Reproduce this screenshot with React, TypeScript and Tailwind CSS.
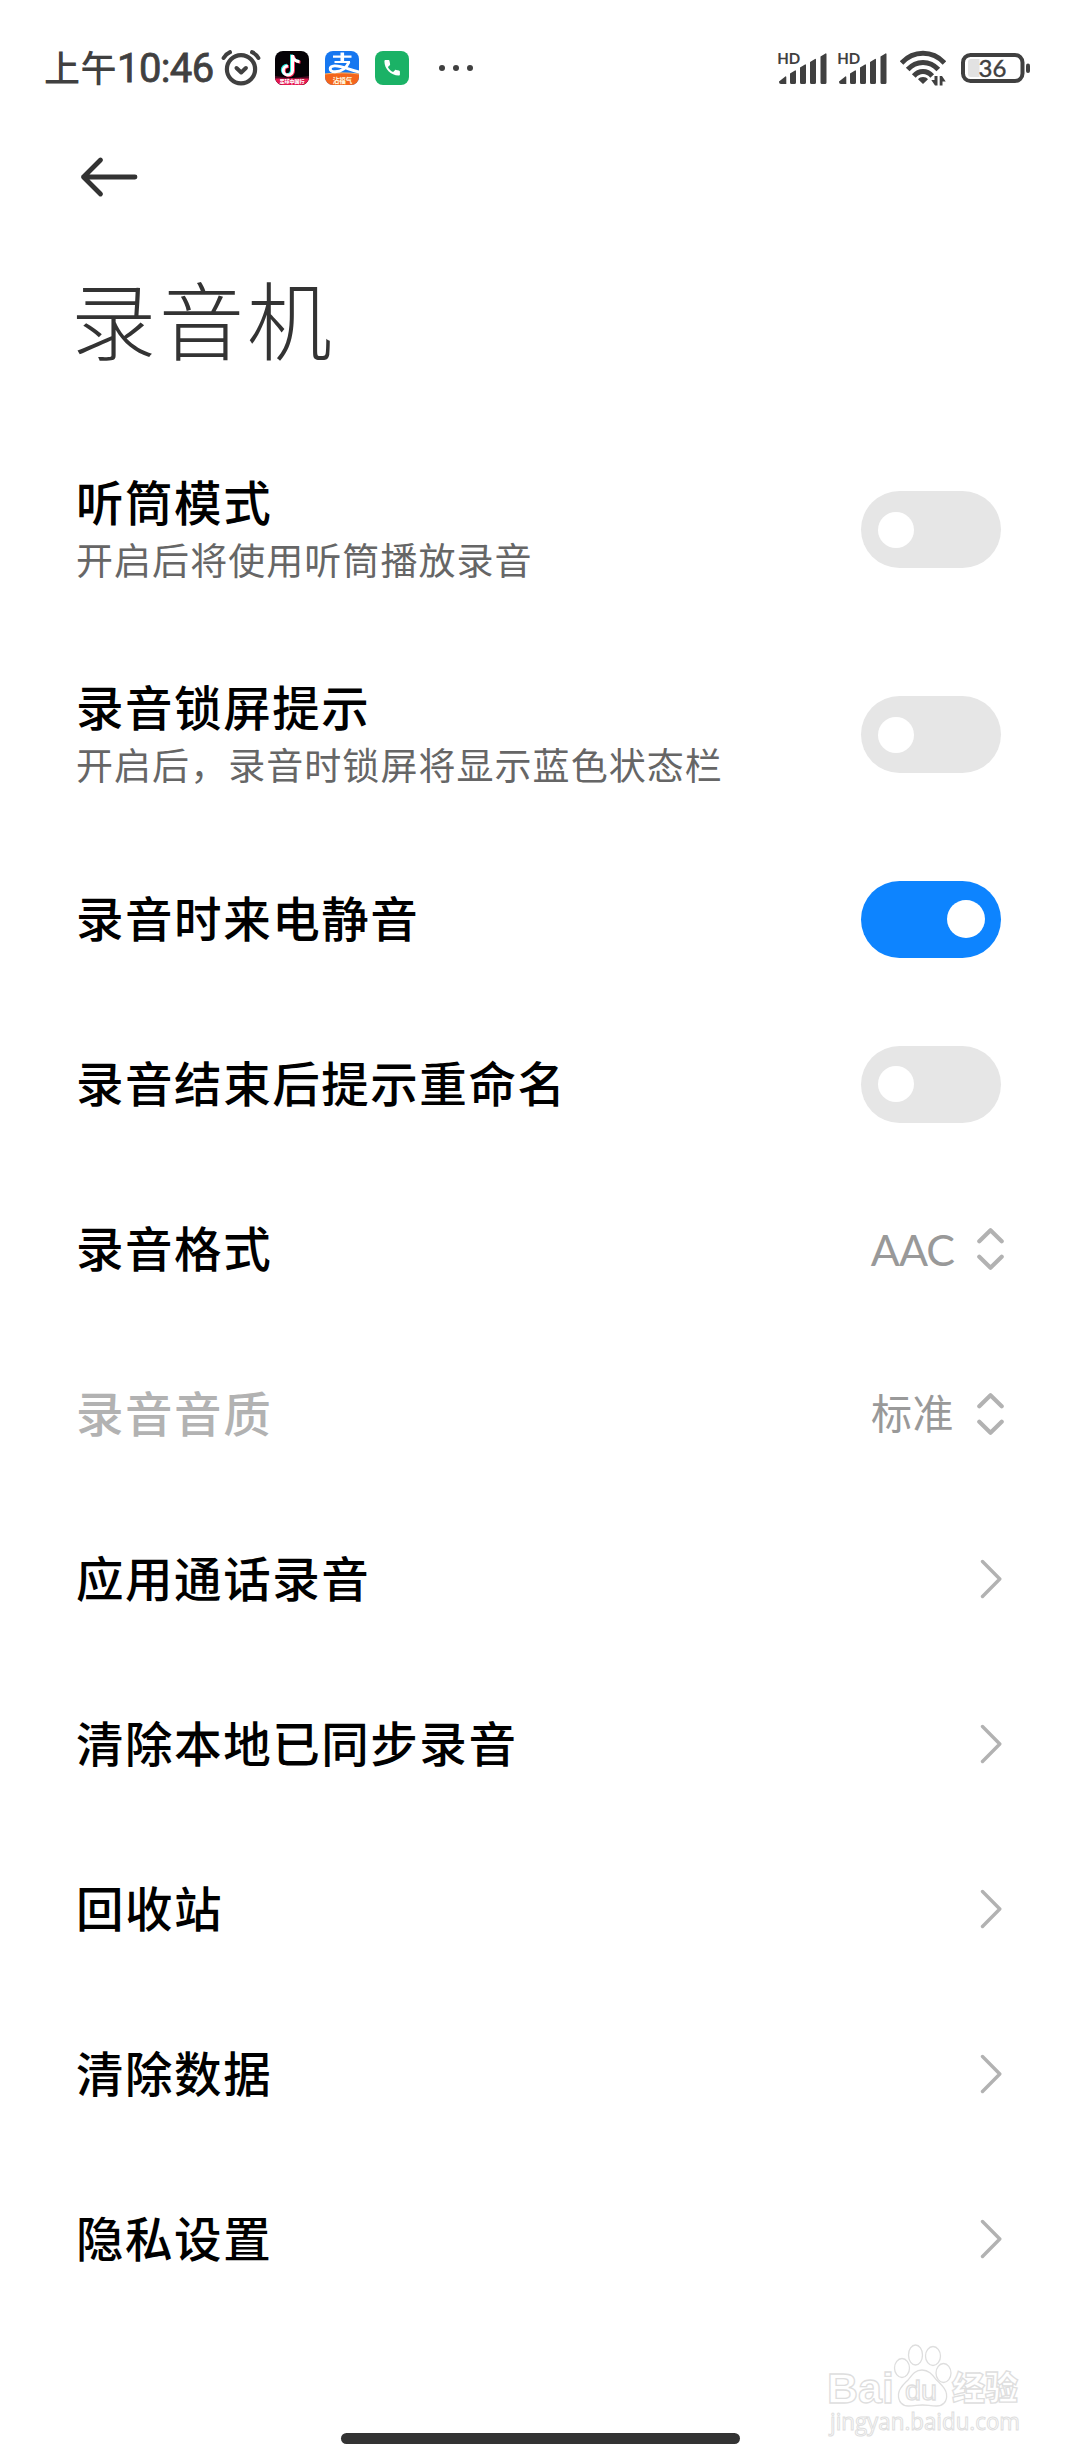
import { useState } from "react";

type RowKind = "switch" | "select" | "link";

interface SettingItem {
  id: string;
  title: string;
  kind: RowKind;
  description?: string;
  value?: string;
  disabled?: boolean;
}

const items: SettingItem[] = [
  { id: "earpiece", title: "听筒模式", kind: "switch", description: "开启后将使用听筒播放录音" },
  { id: "lockscreen", title: "录音锁屏提示", kind: "switch", description: "开启后，录音时锁屏将显示蓝色状态栏" },
  { id: "mute", title: "录音时来电静音", kind: "switch" },
  { id: "rename", title: "录音结束后提示重命名", kind: "switch" },
  { id: "format", title: "录音格式", kind: "select", value: "AAC" },
  { id: "quality", title: "录音音质", kind: "select", value: "标准", disabled: true },
  { id: "apps", title: "应用通话录音", kind: "link" },
  { id: "synced", title: "清除本地已同步录音", kind: "link" },
  { id: "recycle", title: "回收站", kind: "link" },
  { id: "clear", title: "清除数据", kind: "link" },
  { id: "privacy", title: "隐私设置", kind: "link" },
];

function AlarmIcon() {
  return (
    <svg width="40" height="36" viewBox="0 0 40 36" fill="none" stroke="#404040" strokeWidth="4.2" strokeLinecap="round">
      <circle cx="20" cy="19.3" r="14.1" />
      <path d="M15.5 18l4.700 4.500 4.700-4.500" strokeWidth="4" strokeLinejoin="round" />
      <path d="M2.600 8C4.200 5.400 6.300 3.400 9 2.200M37.400 8C35.800 5.400 33.700 3.400 31 2.200" strokeWidth="4" />
    </svg>
  );
}

function DouyinIcon() {
  const note = "M17.500 4v15.500a4.600 4.600 0 1 1-4.600-4.600M17.500 4.500c.5 3.500 3 5.800 7 6.200";
  return (
    <svg width="34" height="34" viewBox="0 0 34 34">
      <defs>
        <clipPath id="douyin-clip">
          <rect width="34" height="34" rx="8" />
        </clipPath>
      </defs>
      <g clipPath="url(#douyin-clip)">
        <rect width="34" height="34" fill="#050206" />
        <path d="M0 25l8 1 9 1 9-1 8-1v9H0z" fill="#4a0a22" />
        <rect y="27.500" width="34" height="7" fill="#e5174f" />
        <g fill="none" strokeWidth="3">
          <path d={note} stroke="#25e5df" transform="translate(-1 -.6)" />
          <path d={note} stroke="#fb2a55" transform="translate(1 .6)" />
          <path d={note} stroke="#fff" />
        </g>
        <text x="17" y="32.300" textAnchor="middle" fontSize="5" fontWeight="900" fill="#fff" fontFamily="Noto Sans CJK SC, sans-serif">
          足球中国行
        </text>
      </g>
    </svg>
  );
}

function AlipayIcon() {
  return (
    <svg width="34" height="34" viewBox="0 0 34 34">
      <defs>
        <clipPath id="alipay-clip">
          <rect width="34" height="34" rx="8" />
        </clipPath>
      </defs>
      <g clipPath="url(#alipay-clip)">
        <rect width="34" height="34" fill="#1677f0" />
        <path d="M0 23c10-1.500 24-1.500 34 0v11H0z" fill="#f4651c" />
        <path d="M0 23c10-1.500 24-1.500 34 0" stroke="#ffb366" fill="none" />
        <g fill="none" stroke="#fff">
          <path d="M17.300 1.500v9.500" strokeWidth="3.600" />
          <path d="M8 5.700h18.500M9.500 11h15.500" strokeWidth="2.200" />
          <path d="M24 11C21.500 17 16.500 20.700 10 20.700c-6.300 0-6.300-5.400-.5-5.800 7-.4 14 3.600 25 6.200" strokeWidth="2.900" />
        </g>
        <text x="17.500" y="31.500" textAnchor="middle" fontSize="6.500" fontWeight="900" fill="#fff3d9" fontFamily="Noto Sans CJK SC, sans-serif">
          沾福气
        </text>
      </g>
    </svg>
  );
}

function PhoneIcon() {
  return (
    <svg width="34" height="34" viewBox="0 0 34 34">
      <rect width="34" height="34" rx="8" fill="#1bb266" />
      <path
        d="M9.400 10.300c0-.7.500-1.200 1.200-1.200h2.700c.6 0 1.100.4 1.200 1l.6 3c.1.400 0 .8-.3 1.100l-1.900 1.700c1.300 2.400 2.900 4 5.200 5.200l1.800-1.900c.3-.3.700-.4 1.100-.3l2.900.6c.6.100 1 .6 1 1.200v2.700c0 .7-.5 1.200-1.200 1.200C15.700 24.300 9.400 18 9.400 10.300z"
        fill="#fff"
      />
    </svg>
  );
}

function SignalIcon() {
  return (
    <svg className="overflow-visible" width="50" height="34" viewBox="0 0 50 34" fill="#404040">
      <text x=".2" y="13.300" fontSize="16" fontWeight="700" fontFamily="Lato, sans-serif" textLength="23" lengthAdjust="spacingAndGlyphs">
        HD
      </text>
      <path d="M2 30.500l6.300-5a.6.600 0 0 1 1 .5v7H4a2 2 0 0 1-2-2z" />
      <path d="M13 22.500l5-3a.6.600 0 0 1 1 .5v11.500a1.500 1.500 0 0 1-1.500 1.500h-3a1.500 1.500 0 0 1-1.500-1.500z" />
      <path d="M23 16.500l5-3a.6.600 0 0 1 1 .5v17.500a1.500 1.500 0 0 1-1.500 1.500h-3a1.500 1.500 0 0 1-1.500-1.500z" />
      <path d="M33 11l5-3a.6.600 0 0 1 1 .5v23a1.500 1.500 0 0 1-1.500 1.500h-3a1.500 1.500 0 0 1-1.500-1.500z" />
      <path d="M43.500 5.500l5-3a.6.600 0 0 1 1 .5v28.500a1.500 1.500 0 0 1-1.500 1.500h-3a1.500 1.500 0 0 1-1.500-1.500z" />
    </svg>
  );
}

function WifiIcon() {
  return (
    <svg width="46" height="36" viewBox="0 0 46 36" fill="none" stroke="#404040" strokeWidth="5">
      <path d="M1.500 13C13.500 0 32.500 0 44.500 13" />
      <path d="M7.700 19.500C16.200 10 29.800 10 38.300 19.500" />
      <path d="M13.800 26C19 20 27 20 32.200 26" />
      <path d="M23 27c-2.200 0-3.800.8-5 2.200l5 4.800 5-4.800c-1.200-1.400-2.800-2.200-5-2.200z" fill="#404040" stroke="none" />
      <path d="M36.300 25.500V36M41.300 36V26" stroke="#fff" strokeWidth="6" />
      <path d="M37.500 26v9.500h-2.500L31.300 30h3.200V26zM39.700 35.500V26h2.300l3.700 5.500h-3.200v4z" fill="#404040" stroke="none" />
    </svg>
  );
}

function BatteryIcon() {
  return (
    <svg width="69" height="30" viewBox="0 0 69 30">
      <rect x="2" y="2" width="59.500" height="26" rx="7.500" fill="none" stroke="#404040" strokeWidth="4" />
      <path d="M10 6h8.500v18H10a3 3 0 0 1-3-3V9a3 3 0 0 1 3-3z" fill="#e2e2e2" />
      <rect x="65" y="10.500" width="4" height="9.500" rx="2" fill="#404040" />
      <text x="31.500" y="23.700" textAnchor="middle" fontSize="24" fill="#404040" stroke="#404040" strokeWidth=".4" fontFamily="Lato, sans-serif">
        36
      </text>
    </svg>
  );
}

function StatusBar() {
  return (
    <header className="flex h-[136px] items-center justify-between pl-[44px] pr-[50px] text-[#404040]">
      <div className="flex items-center">
        <div className="flex w-[177px] items-center whitespace-nowrap leading-none">
          <span className="mb-[5px] text-[36px] font-medium tracking-[0.5px]">上午</span>
          <span className="mt-[2px] font-['Roboto'] text-[40px] font-normal tracking-[-0.6px] [-webkit-text-stroke:0.8px_#404040]">10:46</span>
        </div>
        <AlarmIcon />
        <div className="ml-[14px] flex gap-4">
          <DouyinIcon />
          <AlipayIcon />
          <PhoneIcon />
        </div>
        <div className="ml-[30px] flex gap-2">
          <i className="size-1.5 rounded-full bg-[#404040]" />
          <i className="size-1.5 rounded-full bg-[#404040]" />
          <i className="size-1.5 rounded-full bg-[#404040]" />
        </div>
      </div>
      <div className="flex items-center">
        <SignalIcon />
        <div className="ml-[10px]">
          <SignalIcon />
        </div>
        <div className="ml-[13px]">
          <WifiIcon />
        </div>
        <div className="ml-[15px]">
          <BatteryIcon />
        </div>
      </div>
    </header>
  );
}

function Switch({ checked, onChange }: { checked: boolean; onChange: () => void }) {
  return (
    <button
      role="switch"
      aria-checked={checked}
      onClick={onChange}
      className={
        checked
          ? "mr-[3px] flex h-[77px] w-[140px] items-center justify-end rounded-full bg-[#0d84ff] px-4"
          : "mr-[3px] flex h-[77px] w-[140px] items-center rounded-full bg-[#e6e6e6] px-[17px]"
      }
    >
      <span className={checked ? "size-[38px] rounded-full bg-white" : "size-9 rounded-full bg-white"} />
    </button>
  );
}

function UpDownIcon() {
  return (
    <svg width="27" height="42" viewBox="0 0 27 42" fill="none" stroke="#b2b2b2" strokeWidth="4.200" strokeLinecap="round" strokeLinejoin="round">
      <path d="M2.300 13.200L13.500 2.300l11.200 10.900M2.300 28.800l11.200 10.900 11.200-10.900" />
    </svg>
  );
}

function ChevronIcon() {
  return (
    <svg className="mr-[2px]" width="22" height="40" viewBox="0 0 22 40" fill="none" stroke="#b2b2b2" strokeWidth="3.400" strokeLinecap="round" strokeLinejoin="round">
      <path d="M2.500 2.500L19.800 20 2.500 37.500" />
    </svg>
  );
}

interface SettingRowProps {
  item: SettingItem;
  checked: boolean;
  onToggle: () => void;
}

function SettingRow({ item, checked, onToggle }: SettingRowProps) {
  return (
    <li className={item.description ? "flex h-[205px] items-center justify-between" : "flex h-[165px] items-center justify-between pb-px"}>
      <div className={item.description ? "whitespace-nowrap" : "whitespace-nowrap pb-[4px]"}>
        <div
          className={
            item.disabled
              ? "text-[47.5px] font-medium leading-[60px] tracking-[1.550px] text-[#b2b2b2]"
              : "text-[47.5px] font-medium leading-[60px] tracking-[1.550px] text-black"
          }
        >
          {item.title}
        </div>
        {item.description && (
          <div className="text-[37px] leading-[57px] tracking-[1.050px] text-[#666]">{item.description}</div>
        )}
      </div>
      {item.kind === "switch" && <Switch checked={checked} onChange={onToggle} />}
      {item.kind === "select" && (
        <div className="flex items-center gap-[23px]">
          <span
            className={
              item.disabled
                ? "pb-[5px] text-[41px] leading-none tracking-[0.5px] text-[#999]"
                : "font-['Lato',sans-serif] text-[43px] leading-none tracking-[-1px] text-[#999]"
            }
          >
            {item.value}
          </span>
          <UpDownIcon />
        </div>
      )}
      {item.kind === "link" && <ChevronIcon />}
    </li>
  );
}

function Watermark() {
  return (
    <svg
      className="absolute left-[820px] top-[2340px] overflow-visible"
      width="208"
      height="104"
      viewBox="-4 0 208 104"
      fill="#fff"
      stroke="#dedede"
      strokeWidth="1.300"
    >
      <text x="3" y="63" fontSize="43" fontWeight="700" fontFamily="Liberation Sans, sans-serif" textLength="67" lengthAdjust="spacingAndGlyphs">
        Bai
      </text>
      <ellipse cx="78" cy="28" rx="7.500" ry="9.500" />
      <ellipse cx="91.500" cy="15" rx="7" ry="10" />
      <ellipse cx="109" cy="16" rx="7.500" ry="9.500" />
      <ellipse cx="119.500" cy="33" rx="7.500" ry="9.500" />
      <path d="M98 30c-7 0-10 5-14 10-4 4-9 8-9.500 14-.5 8 4 12 10 12s9-1 14-1 8 1 14 1 11-4 10-12c-.6-6-6-10-10-14-4-5-7.500-10-14.500-10z" />
      <text x="81" y="60" fontSize="28" fontFamily="Liberation Sans, sans-serif" textLength="32" lengthAdjust="spacingAndGlyphs">
        du
      </text>
      <text x="128" y="60" fontSize="33" fontWeight="900" fontFamily="Noto Sans CJK SC, sans-serif">
        经验
      </text>
      <text x="6" y="90" fontSize="23" strokeWidth="1" fontFamily="Open Sans, sans-serif" textLength="190" lengthAdjust="spacingAndGlyphs">
        jingyan.baidu.com
      </text>
    </svg>
  );
}

export default function App() {
  const [enabled, setEnabled] = useState<Record<string, boolean>>({ mute: true });

  const toggle = (id: string) => {
    setEnabled((prev) => ({ ...prev, [id]: !prev[id] }));
  };

  return (
    <div className="relative flex h-[2460px] w-[1080px] flex-col overflow-hidden bg-white font-['Noto_Sans_CJK_SC',sans-serif]">
      <StatusBar />
      <nav className="flex h-[82px] items-center pl-[79px]">
        <button aria-label="返回">
          <svg width="60" height="42" viewBox="0 0 60 42" fill="none" stroke="#333" strokeWidth="4.800" strokeLinecap="round" strokeLinejoin="round">
            <path d="M56 21H4.500M21.500 4L4.500 21l17 17" />
          </svg>
        </button>
      </nav>
      <h1 className="flex h-[209px] items-center pb-[12px] pl-[71px] text-[85px] font-light leading-none tracking-[3px] text-[#333]">
        录音机
      </h1>
      <ul className="pl-[76px] pr-[76px]">
        {items.map((item) => (
          <SettingRow key={item.id} item={item} checked={!!enabled[item.id]} onToggle={() => toggle(item.id)} />
        ))}
      </ul>
      <Watermark />
      <div className="mx-auto mb-[16px] mt-auto h-[11px] w-[399px] rounded-full bg-[#333]" />
    </div>
  );
}
